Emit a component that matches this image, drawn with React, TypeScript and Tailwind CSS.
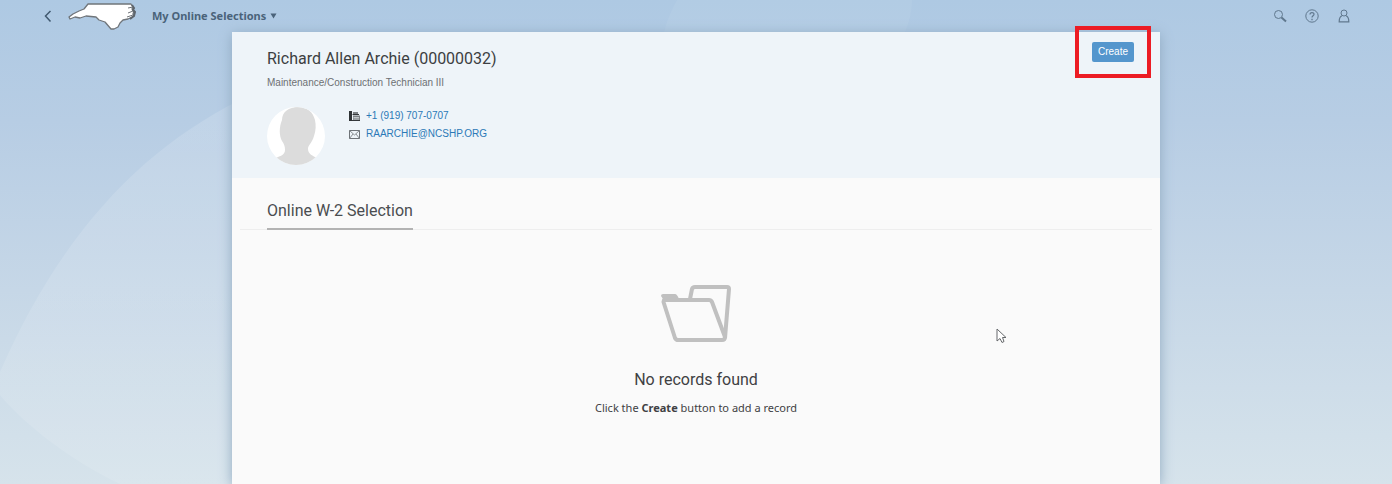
import type { ReactNode } from 'react';

const employee = {
  name: 'Richard Allen Archie',
  id: '00000032',
  title: 'Maintenance/Construction Technician III',
  phone: '+1 (919) 707-0707',
  email: 'RAARCHIE@NCSHP.ORG',
};

function Backdrop() {
  return (
    <svg
      className="absolute inset-0 h-full w-full"
      viewBox="0 0 1392 484"
      preserveAspectRatio="none"
      aria-hidden="true"
    >
      <defs>
        <linearGradient id="sky" x1="0" y1="0" x2="0" y2="1">
          <stop offset="0" stopColor="#aec9e3" />
          <stop offset="0.25" stopColor="#b7cde4" />
          <stop offset="0.6" stopColor="#c6d7e7" />
          <stop offset="1" stopColor="#d6e3eb" />
        </linearGradient>
        <linearGradient id="arc" x1="0" y1="0" x2="0" y2="1">
          <stop offset="0" stopColor="#fff" stopOpacity="0.14" />
          <stop offset="1" stopColor="#fff" stopOpacity="0.1" />
        </linearGradient>
      </defs>
      <rect width="1392" height="484" fill="url(#sky)" />
      <path d="M240 100C140 150 60 235 0 372V395C25 425 70 460 120 484H240Z" fill="url(#arc)" />
      <path d="M677 0Q668 16 664 32H905Q912 16 912 0Z" fill="#fff" fillOpacity="0.06" />
    </svg>
  );
}

function StateLogo() {
  return (
    <svg width="68" height="28" viewBox="0 0 68 28" aria-hidden="true">
      <path
        d="M20 2L63 2L65 5L64 7L66 9L65 12L66 14L60 17L55 18L52 21L50 25L46 27L43 27L37 20L31 18L28 15L18 14L12 16L7 15L2 17L1 15L5 12L11 9L16 7Z"
        fill="#fff"
        stroke="#70757a"
        strokeWidth="1.3"
        strokeLinejoin="round"
      />
      <path d="M64 3L66 6L65 8L67 10L66 14L62 17" fill="none" stroke="#5d646b" strokeWidth="2" />
      <path d="M60 6L65 5M60 11L65 9M59 15L65 13" fill="none" stroke="#70757a" />
    </svg>
  );
}

function ShellButton({ label, children }: { label: string; children: ReactNode }) {
  return (
    <button type="button" aria-label={label} className="flex size-4 items-center justify-center text-[#60788e]">
      {children}
    </button>
  );
}

function ShellHeader() {
  return (
    <header className="flex h-8 items-center justify-between pr-10 pl-10">
      <div className="flex items-center">
        <ShellButton label="Back">
          <svg width="16" height="16" viewBox="0 0 16 16" fill="none" stroke="#415a70" strokeWidth="1.5">
            <path d="M10.5 3L5.5 8L10.5 13.5" />
          </svg>
        </ShellButton>
        <a href="#home" aria-label="Home" className="ml-3">
          <StateLogo />
        </a>
        <button
          type="button"
          className="ml-4 flex items-center gap-1 font-['Noto_Sans',sans-serif] text-[11px] leading-4 font-bold text-[#4a637a]"
        >
          My Online Selections
          <svg width="7" height="6" viewBox="0 0 7 6" fill="currentColor" aria-hidden="true">
            <path d="M0.500 0.5H6.500L3.5 5.5Z" />
          </svg>
        </button>
      </div>
      <div className="flex items-center gap-4">
        <ShellButton label="Search">
          <svg width="16" height="16" viewBox="0 0 16 16" fill="none" stroke="currentColor">
            <circle cx="6.5" cy="6.5" r="4" />
            <path d="M9.5 9.5L14 13.5" strokeWidth="2" />
          </svg>
        </ShellButton>
        <ShellButton label="Help">
          <svg width="16" height="16" viewBox="0 0 16 16" fill="none" stroke="currentColor">
            <circle cx="8" cy="8" r="6.2" />
            <path d="M6 6.5C6 4 10 4 10 6.3C10 7.8 8 7.8 8 9.6" strokeWidth="1.2" />
            <path d="M8 10.8V12.2" strokeWidth="1.3" />
          </svg>
        </ShellButton>
        <ShellButton label="Profile">
          <svg width="16" height="16" viewBox="0 0 16 16" fill="none" stroke="currentColor">
            <circle cx="8" cy="5" r="3" />
            <path d="M6 7.8C4 8.5 3.2 10 3.2 13.8H12.8C12.8 10 12 8.5 10 7.8" strokeWidth="1.2" />
          </svg>
        </ShellButton>
      </div>
    </header>
  );
}

function Avatar() {
  return (
    <svg width="58" height="58" viewBox="0 0 58 58" role="img" aria-label="Profile photo">
      <defs>
        <clipPath id="avatar">
          <circle cx="29" cy="29" r="29" />
        </clipPath>
      </defs>
      <g clipPath="url(#avatar)">
        <rect width="58" height="58" fill="#fff" />
        <path
          d="M31 0C22 0 15 5 15 13C12 20 12 29 15 34C17 37 18 39 18 43C18 48 13 49 9 51V58H50V51C46 49 41 47 41 42C41 38 45 36 47 29C49 23 49 18 48 13C46 5 40 0 31 0Z"
          fill="#dcdcdc"
        />
      </g>
    </svg>
  );
}

function FaxIcon() {
  return (
    <svg width="11" height="10" viewBox="0 0 11 10" aria-hidden="true">
      <path d="M0 0H3V10H0Z" fill="#2f3336" />
      <path d="M4 1H9V4H4ZM4 4.5H11V10H4Z" fill="#7c8185" />
      <path d="M3 9.5H11M3.5 3.5H10" stroke="#34383b" />
      <path d="M4.500 6.5H10M4.500 8H10" stroke="#dfe5e9" strokeWidth="0.7" />
    </svg>
  );
}

function MailIcon() {
  return (
    <svg width="11" height="9" viewBox="0 0 11 9" fill="none" stroke="#6e7378" aria-hidden="true">
      <path d="M0.5 0.5H10.5V8.5H0.5Z" />
      <path d="M0.5 0.5L5.5 5L10.5 0.5M0.5 8.5L4 4M10.5 8.5L7 4" strokeWidth="0.8" />
    </svg>
  );
}

function FolderIcon() {
  return (
    <svg width="70" height="58" viewBox="0 0 70 58" fill="none" stroke="#c0c0c0" strokeWidth="4" strokeLinejoin="round" aria-hidden="true">
      <path d="M29 14L31 4Q31.500 2 34 2H66Q68 2 68 4L64 53" />
      <path d="M3 15H48Q50 15 51 17L64 52Q64 55 61 55H17Q15 55 14 53L2.500 17Z" />
      <path d="M0 11Q0 9 2 9H14Q16 9 18 14H2Z" fill="#c0c0c0" stroke="none" />
    </svg>
  );
}

function EmployeeHeader() {
  return (
    <section className="flex h-[146px] items-start justify-between bg-[#eef4f9] pr-[26px] pl-[35px]">
      <div className="pt-[17px]">
        <h1 className="font-[Roboto,sans-serif] text-[16px] leading-5 text-[#3c3f42]">
          {employee.name} ({employee.id})
        </h1>
        <p className="mt-2 text-[10px] leading-3 text-[#6d7073]">{employee.title}</p>
        <div className="mt-[18px] flex gap-6">
          <Avatar />
          <ul className="text-[10px] leading-[18px] text-[#2b79b7]">
            <li className="flex items-center gap-1.5">
              <FaxIcon />
              <a href="tel:+19197070707">{employee.phone}</a>
            </li>
            <li className="flex items-center gap-1.5">
              <MailIcon />
              <a href="mailto:RAARCHIE@NCSHP.ORG">{employee.email}</a>
            </li>
          </ul>
        </div>
      </div>
      <div className="relative mt-2.5">
        <button type="button" className="block h-5 w-[42px] rounded-xs bg-[#5496cd] text-[10px] leading-5 text-white">
          Create
        </button>
        {/* Highlight frame */}
        <div className="pointer-events-none absolute -inset-x-[17px] -inset-y-4 border-4 border-[#ec1c24]" />
      </div>
    </section>
  );
}

function SelectionSection() {
  return (
    <section className="flex-1">
      <div className="mx-2 flex border-b border-[#eeeeee] pt-[23px] pl-[27px]">
        <h2 className="-mb-px border-b-2 border-[#b3b3b3] pb-[7px] font-[Roboto,sans-serif] text-[16px] leading-5 text-[#4a4d50]">
          Online W-2 Selection
        </h2>
      </div>
      <div className="flex flex-col items-center pt-[55px] text-[#3f4143]">
        <FolderIcon />
        <p className="mt-[27px] font-[Roboto,sans-serif] text-[16px] leading-5">No records found</p>
        <p className="mt-2.5 font-['Noto_Sans',sans-serif] text-[11px] leading-4">
          Click the <strong className="font-bold">Create</strong> button to add a record
        </p>
      </div>
    </section>
  );
}

function Pointer() {
  return (
    <svg className="absolute top-[328px] left-[996px]" width="11" height="16" viewBox="0 0 11 16" aria-hidden="true">
      <path d="M1 1V13L4 10.500L6 14.500L8 13.500L6.500 9.500H10Z" fill="#fff" stroke="#66696c" />
    </svg>
  );
}

export default function App() {
  return (
    <div className="relative min-h-screen overflow-hidden font-['Liberation_Sans',Arial,sans-serif]">
      <Backdrop />
      <div className="relative flex min-h-screen flex-col">
        <ShellHeader />
        <main className="mx-auto flex w-2/3 flex-1 flex-col bg-[#fafafa] shadow-[0_2px_12px_#8fa9c0]">
          <EmployeeHeader />
          <SelectionSection />
        </main>
      </div>
      <Pointer />
    </div>
  );
}
